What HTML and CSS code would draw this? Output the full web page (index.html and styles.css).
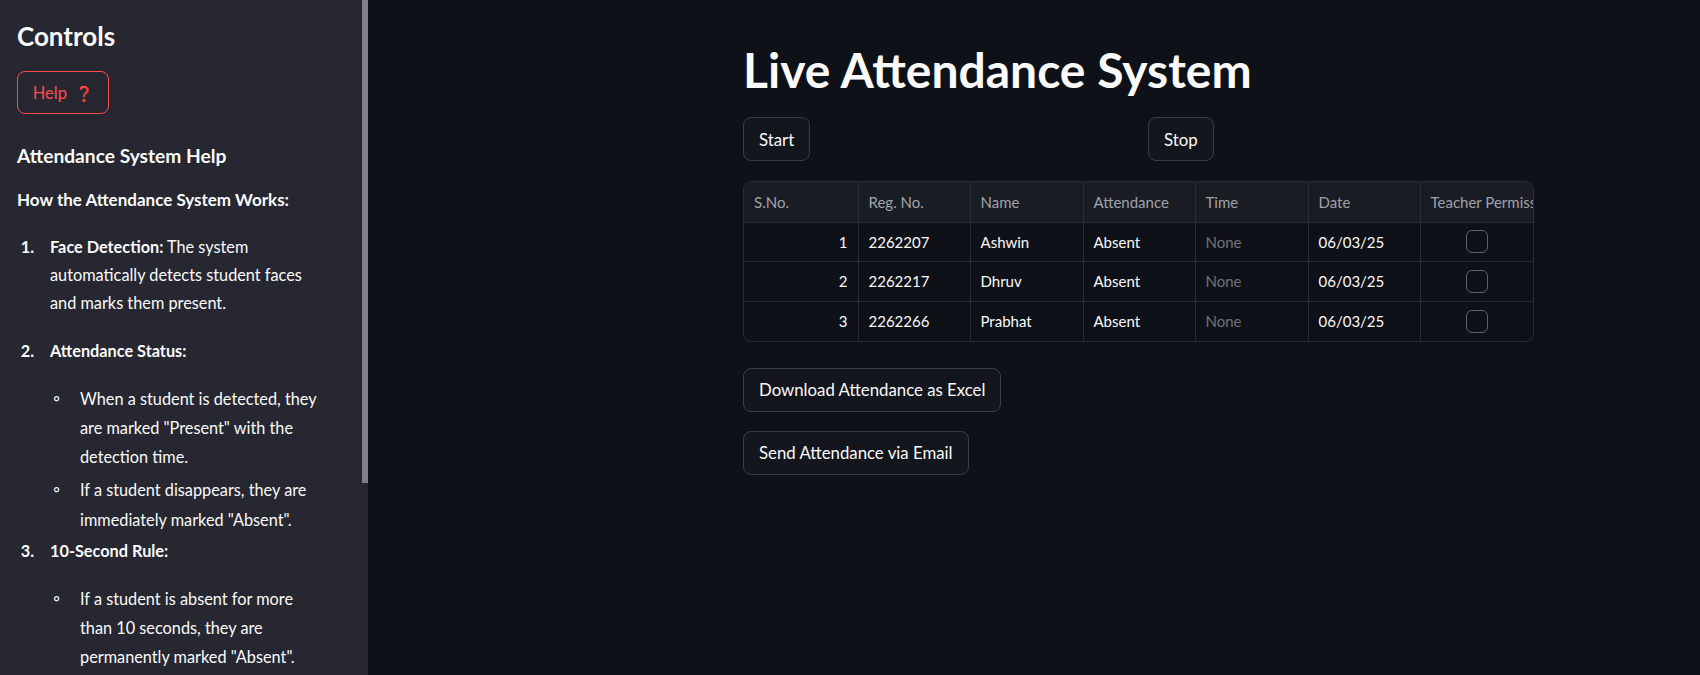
FILE: index.html
```html
<!DOCTYPE html>
<html lang="en">
<head>
<meta charset="utf-8">
<title>Live Attendance System</title>
<link rel="stylesheet" href="styles.css">
</head>
<body>
<div class="app">
  <aside class="sidebar">
    <div class="side-content">
      <h2 class="side-title">Controls</h2>
      <button class="help-btn">Help <span class="q">❓</span></button>
      <h3 class="help-title">Attendance System Help</h3>
      <p class="help-sub">How the Attendance System Works:</p>
      <ol class="help-list">
        <li class="first"><b>Face Detection:</b> The system automatically detects student faces and marks them present.</li>
        <li><b>Attendance Status:</b>
          <ul class="sub-list">
            <li>When a student is detected, they are marked "Present" with the detection time.</li>
            <li>If a student disappears, they are immediately marked "Absent".</li>
          </ul>
        </li>
        <li><b>10-Second Rule:</b>
          <ul class="sub-list">
            <li>If a student is absent for more than 10 seconds, they are permanently marked "Absent".</li>
          </ul>
        </li>
      </ol>
    </div>
    <div class="scroll-track"><div class="scroll-thumb"></div></div>
  </aside>
  <main class="main">
    <div class="block">
      <h1 class="title">Live Attendance System</h1>
      <div class="controls-row">
        <div class="col"><button class="btn">Start</button></div>
        <div class="col"><button class="btn">Stop</button></div>
      </div>
      <div class="table-wrap">
        <table class="grid">
          <colgroup>
            <col class="c114"><col class="c112"><col class="c113"><col class="c112"><col class="c113"><col class="c112"><col class="c115">
          </colgroup>
          <thead>
            <tr><th>S.No.</th><th>Reg. No.</th><th>Name</th><th>Attendance</th><th>Time</th><th>Date</th><th class="clip">Teacher Permission</th></tr>
          </thead>
          <tbody>
            <tr><td class="num">1</td><td>2262207</td><td>Ashwin</td><td>Absent</td><td class="none">None</td><td>06/03/25</td><td class="chk"><span class="box"></span></td></tr>
            <tr><td class="num">2</td><td>2262217</td><td>Dhruv</td><td>Absent</td><td class="none">None</td><td>06/03/25</td><td class="chk"><span class="box"></span></td></tr>
            <tr><td class="num">3</td><td>2262266</td><td>Prabhat</td><td>Absent</td><td class="none">None</td><td>06/03/25</td><td class="chk"><span class="box"></span></td></tr>
          </tbody>
        </table>
      </div>
      <div class="actions">
        <button class="btn">Download Attendance as Excel</button>
        <button class="btn">Send Attendance via Email</button>
      </div>
    </div>
  </main>
</div>
</body>
</html>
```

FILE: styles.css
```css
* { box-sizing: border-box; }
html, body {
  margin: 0;
  padding: 0;
  height: 100%;
  background: #0e1117;
  color: #fafafa;
  font-family: "Lato", "Noto Sans", sans-serif;
}
.app {
  display: flex;
  height: 675px;
  overflow: hidden;
}
.sidebar {
  width: 368px;
  flex: none;
  background: #262730;
  display: flex;
}
.side-content {
  flex: 1;
  padding: 18px 0 0 17px;
}
.scroll-track {
  width: 6px;
  flex: none;
}
.scroll-thumb {
  height: 483px;
  background: #808087;
}
.side-title {
  margin: 0;
  font-size: 26px;
  font-weight: 700;
  line-height: 36px;
}
.help-btn {
  margin-top: 17px;
  display: block;
  width: 92px;
  height: 43px;
  background: transparent;
  border: 1px solid #ff4b4b;
  border-radius: 8px;
  color: #ff4b4b;
  font-family: inherit;
  font-size: 16.5px;
  padding: 0 0 0 1px;
  text-align: center;
}
.help-btn .q { font-size: 15px; margin-left: 4px; }
.help-title {
  margin: 29px 0 0;
  font-size: 19.2px;
  font-weight: 700;
  line-height: 26px;
}
.help-sub {
  margin: 18px 0 0;
  font-size: 17px;
  font-weight: 700;
  line-height: 26px;
}
.help-list {
  margin: 20px 0 0;
  padding: 0 0 0 33px;
  font-size: 16.3px;
  line-height: 28.2px;
  width: 300px;
}
.help-list > li { margin-bottom: 0; }
.help-list > li.first { margin-bottom: 19px; }
.help-list > li::marker {
  content: counter(list-item) ".\00a0\00a0\00a0\00a0";
  font-weight: 700;
}
.sub-list {
  margin: 18px 0 0;
  padding-left: 30px;
  line-height: 29.2px;
}
.sub-list li { margin-bottom: 3px; list-style: outside; }
.sub-list li::marker {
  content: "\25E6\00a0\00a0\00a0\00a0";
  font-size: 19px;
}

.main {
  flex: 1;
  padding-left: 375px;
}
.block {
  width: 791px;
}
.title {
  margin: 41px 0 0;
  font-size: 48px;
  font-weight: 700;
  line-height: 58px;
}
.controls-row {
  display: flex;
  margin-top: 18px;
}
.col { width: 405px; flex: none; }
.btn {
  display: block;
  height: 44px;
  padding: 0 15px;
  background: #13161d;
  border: 1px solid #3b3d45;
  border-radius: 8px;
  color: #fafafa;
  font-family: inherit;
  font-size: 16.8px;
}
.table-wrap {
  margin-top: 20px;
  border: 1px solid #2a2c35;
  border-radius: 8px;
  overflow: hidden;
  width: 791px;
}
.grid {
  border-collapse: collapse;
  width: 789px;
  table-layout: fixed;
  font-size: 15px;
}
.c114 { width: 114px; }
.c112 { width: 112px; }
.c113 { width: 113px; }
.c115 { width: 113px; }
.grid th, .grid td {
  border-right: 1px solid #2a2c35;
  border-bottom: 1px solid #2a2c35;
  padding: 0 10px;
  text-align: left;
  white-space: nowrap;
  overflow: hidden;
}
.grid th:last-child, .grid td:last-child { border-right: none; }
.grid tbody tr:last-child td { border-bottom: none; }
.grid th {
  height: 40px;
  background: #1a1c24;
  color: #a0a2aa;
  font-weight: 400;
}
.grid th.clip { text-overflow: clip; padding-right: 0; }
.grid td {
  height: 39.5px;
  color: #fafafa;
}
.grid td.num { text-align: right; }
.grid td.none { color: #6f717a; }
.grid td.chk { text-align: center; padding: 0; }
.box {
  display: inline-block;
  width: 22px;
  height: 23px;
  border: 1.5px solid #5d6068;
  border-radius: 6px;
  vertical-align: middle;
}
.actions {
  margin-top: 26px;
  display: flex;
  flex-direction: column;
  align-items: flex-start;
  gap: 19px;
}
```
